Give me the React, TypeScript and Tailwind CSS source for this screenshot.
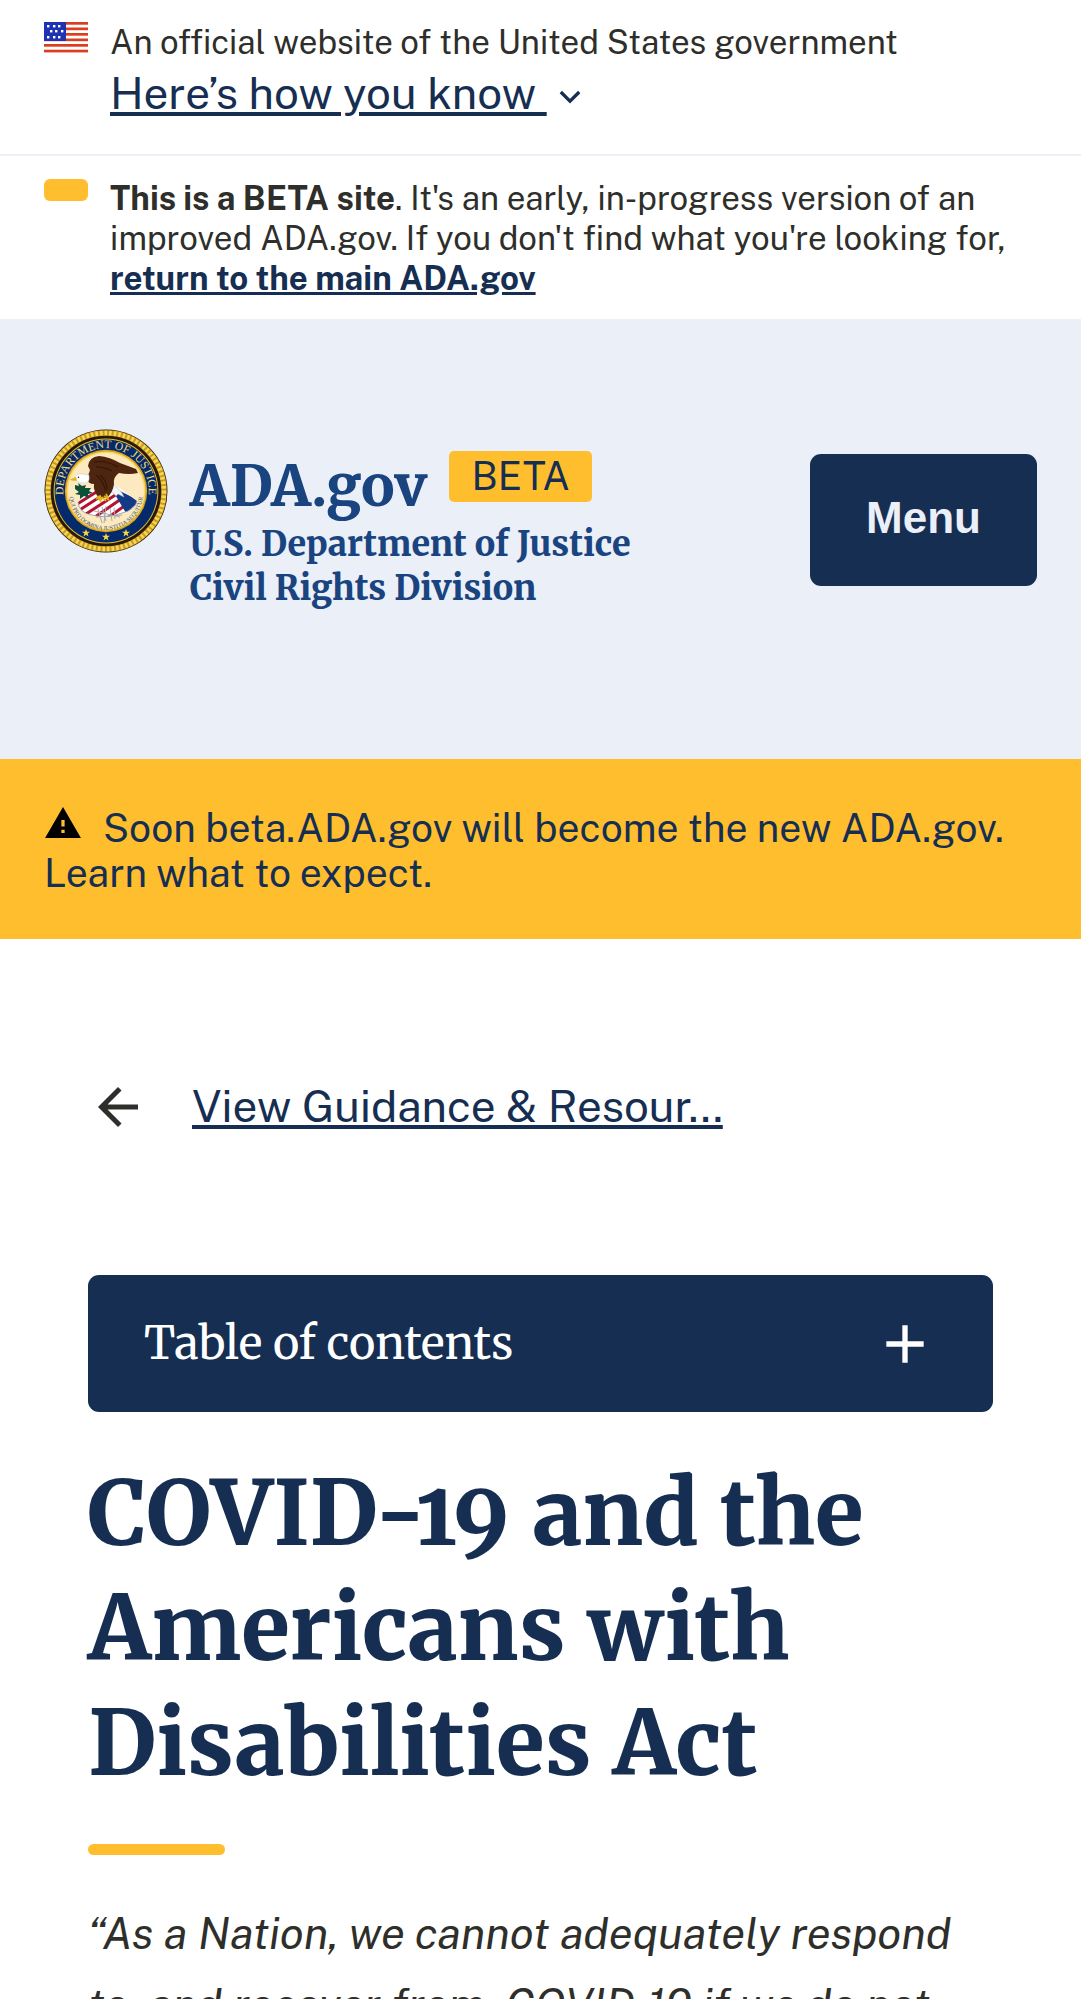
import React from "react";

const NAVY = "#162e51";

function Flag() {
  const stars = [
    [4, 4], [10, 4], [15, 4],
    [7, 9], [12, 9], [18, 9],
    [4, 15], [10, 15], [15, 15],
  ];
  return (
    <svg viewBox="0 0 44 31" className="h-[31px] w-11 shrink-0" aria-hidden="true">
      <rect width="44" height="31" fill="#fff" />
      {[0, 5.5, 11, 16.5, 22, 27.7].map((y) => (
        <rect key={y} y={y} width="44" height="2.7" fill="#db3e1f" />
      ))}
      <rect width="22" height="19" fill="#1e33b1" />
      {stars.map(([x, y]) => (
        <rect key={`${x}-${y}`} x={x - 1} y={y - 1} width="2.4" height="2.4" fill="#fff" />
      ))}
    </svg>
  );
}

function Seal() {
  return (
    <svg
      viewBox="0 0 124 124"
      className="h-[124px] w-[124px] shrink-0"
      role="img"
      aria-label="Department of Justice seal"
    >
      <defs>
        <path id="ringTop" d="M 21.4 75.5 A 42.8 42.8 0 1 1 102.6 75.5" />
        <path id="motto" d="M 25.5 58 A 37 37 0 1 0 98.5 58" />
        <clipPath id="shieldClip">
          <path d="M34 73 Q35 84 48 86 Q62 90 78 84 Q91 81 93 72 L70 55 L45 62 Z" />
        </clipPath>
      </defs>
      <circle cx="62" cy="62" r="61.5" fill="#2a1c0c" />
      <circle cx="62" cy="62" r="58" fill="none" stroke="#c79a22" strokeWidth="5.4" />
      <circle
        cx="62"
        cy="62"
        r="58"
        fill="none"
        stroke="#f5d551"
        strokeWidth="4.6"
        strokeDasharray="2.6 2"
      />
      <circle cx="62" cy="62" r="54" fill="#2a1606" />
      <circle cx="62" cy="62" r="52.4" fill="#e5c02c" />
      <circle cx="62" cy="62" r="51.4" fill="#042a6b" />
      <circle cx="62" cy="62" r="41.2" fill="#d9a520" />
      <circle cx="62" cy="62" r="39.6" fill="#f7d968" />
      <circle cx="62" cy="62" r="38" fill="#fde9bf" />
      <text fill="#f0d978" fontFamily="Liberation Serif, serif" fontSize="11.6">
        <textPath href="#ringTop" startOffset="50%" textAnchor="middle">
          DEPARTMENT OF JUSTICE
        </textPath>
      </text>
      <g clipPath="url(#shieldClip)">
        <rect x="30" y="52" width="66" height="40" fill="#fff" />
        <g stroke="#b5122f" strokeWidth="3">
          <path d="M30 77 L62 57" />
          <path d="M34 82 L68 60" />
          <path d="M42 85 L76 63" />
          <path d="M51 88 L80 68" />
          <path d="M62 90 L86 73" />
        </g>
        <path d="M66 57 L96 72 L82 84 L76 74 Z" fill="#123a86" />
      </g>
      <path d="M34 73 Q35 84 48 86 Q62 90 78 84 Q91 81 93 72" fill="none" stroke="#8d98a8" strokeWidth="0.8" />
      <path d="M64 60 L68 54 Q78 62 80 68 L74 65 L72 67 L69 64 Z" fill="#f3f4f6" stroke="#a9b0ba" strokeWidth="0.5" />
      <path
        d="M44 37 Q45 28 55 27 Q66 28 76 34 L92 40 L94 44 Q85 46 75 44 Q69 48 70 55 Q69 63 63 69 L55 69 Q49 62 50 55 Q44 55 43 50 L46 41 Z"
        fill="#4e2610"
      />
      <path d="M50 33 Q62 31 74 38 M52 38 Q60 38 68 42 M52 46 Q58 50 62 62 M56 46 Q63 52 63 60" fill="none" stroke="#351505" strokeWidth="1.1" />
      <path d="M31 48 Q33 44 39 45 L45 46 Q46 52 43 54 Q36 55 31 51 Z" fill="#fff" stroke="#a9b0ba" strokeWidth="0.4" />
      <path d="M32 48 L26 50.5 Q28 52.5 33 51.5 Z" fill="#e2b714" />
      <circle cx="34.5" cy="48.2" r="0.7" fill="#111" />
      <path d="M31 56 l4 1 l-1 -3 l4 3 l4 -1 l-1 3 l6 0 l-2 3 l4 2 l-5 1 l1 4 l-5 -2 l-4 3 l0 -4 l-5 -1 l4 -2 l-4 -3 z" fill="#0c5137" />
      <path d="M52 70 l4 -3 l2 4 M58 68 l4 4 M60 67 l5 4 M54 67 l3 6 M62 65 l2 4" stroke="#e2b714" strokeWidth="1.7" fill="none" />
      <path d="M54 80 L58 94 M58 78 L62 92 M62 77 L60 94 M66 79 L68 92 M70 79 L71 90 M50 82 L76 88 M52 88 L78 86" stroke="#a7aab0" strokeWidth="1" fill="none" />
      <text fill="#3d5372" fontFamily="Liberation Serif, serif" fontSize="6">
        <textPath href="#motto" startOffset="50%" textAnchor="middle">
          QUI PRO DOMINA JUSTITIA SEQUITUR
        </textPath>
      </text>
      {[
        [42, 104],
        [62, 108],
        [82, 104],
      ].map(([x, y]) => (
        <path
          key={x}
          transform={`translate(${x} ${y})`}
          d="M0 -4 L1 -1.2 L4 -1.2 L1.6 0.6 L2.5 3.5 L0 1.8 L-2.5 3.5 L-1.6 0.6 L-4 -1.2 L-1 -1.2 Z"
          fill="#f5d64c"
        />
      ))}
    </svg>
  );
}

function GovBanner() {
  return (
    <section
      aria-label="Official government website"
      className="flex gap-[22px] border-b-2 border-[#ebeff7] px-11 pt-[22px] pb-[35px]"
    >
      <Flag />
      <div>
        <p className="text-[33px] leading-10">An official website of the United States government</p>
        <button
          type="button"
          className="mt-[5px] flex items-center text-[44px] leading-[52px] text-[#162e51]"
        >
          <span className="whitespace-pre underline">{"Here’s how you know "}</span>
          <svg viewBox="0 0 22 14" className="mt-2 ml-3 h-3.5 w-[22px]" aria-hidden="true">
            <path d="M1.8 2 L11 11.2 L20.2 2" fill="none" stroke={NAVY} strokeWidth="3.2" />
          </svg>
        </button>
      </div>
    </section>
  );
}

function BetaBanner() {
  return (
    <section aria-label="Beta notice" className="flex gap-[22px] px-11 pt-[22px] pb-[21px]">
      <span className="mt-px h-[22px] w-11 shrink-0 rounded-md bg-[#ffbe2e]" />
      <p className="text-[33px] leading-10">
        <strong className="font-bold">This is a BETA site</strong>. It's an early, in-progress version of an
        improved ADA.gov. If you don't find what you're looking for,{" "}
        <a href="#main-site" className="font-bold text-[#162e51] underline">
          return to the main ADA.gov
        </a>
      </p>
    </section>
  );
}

function SiteHeader() {
  return (
    <header className="flex items-start bg-[#ebeff7] px-11 pt-[110px] pb-[148px]">
      <Seal />
      <div className="mt-[22px] ml-[22px] grow font-['Merriweather','DejaVu_Serif_Condensed',serif] font-extrabold text-[#1a4480]">
        <div className="flex items-start gap-[22px]">
          <a href="#home" className="text-[56px] leading-[71px]">
            ADA.gov
          </a>
          <span className="rounded-[5px] bg-[#ffbe2e] px-[22px] font-['Public_Sans','Inter',sans-serif] text-[39px] leading-[51px] font-normal text-[#162e51]">
            BETA
          </span>
        </div>
        <p className="pb-px text-[34px] leading-11">
          U.S. Department of Justice
          <br />
          Civil Rights Division
        </p>
      </div>
      <button
        type="button"
        className="mt-[25px] h-[132px] w-[227px] shrink-0 rounded-[11px] bg-[#162e51] pb-1 font-['Liberation_Sans',Arial,sans-serif] text-[44px] font-bold text-[#ebeff7]"
      >
        Menu
      </button>
    </header>
  );
}

function SiteAlert() {
  return (
    <section aria-label="Site alert" className="bg-[#ffbe2e] px-11 pt-[47px] pb-[43px] text-[39px] leading-[45px] text-[#162e51]">
      <p>
        <svg viewBox="1 2 22 19" className="mr-[22px] mb-1 ml-px inline h-[31px] w-9 align-baseline" aria-hidden="true">
          <path d="M1 21h22L12 2 1 21zm12-3h-2v-2h2v2zm0-4h-2v-4h2v4z" fill="#000" />
        </svg>
        Soon beta.ADA.gov will become the new ADA.gov. Learn what to expect.
      </p>
    </section>
  );
}

export default function App() {
  return (
    <div className="max-h-screen overflow-hidden bg-white font-['Public_Sans','Inter',sans-serif] text-[#2e2e2a]">
      <GovBanner />
      <BetaBanner />
      <SiteHeader />
      <SiteAlert />
      <main className="px-[88px] pt-[138px]">
        <nav aria-label="Breadcrumb" className="flex items-start gap-11">
          <svg viewBox="0 0 24 24" className="h-[60px] w-[60px] shrink-0" aria-hidden="true">
            <path d="M20 11H7.83l5.59-5.59L12 4l-8 8 8 8 1.41-1.41L7.83 13H20v-2z" fill="#2e2e2a" />
          </svg>
          <a href="#resources" className="text-[44px] leading-[58px] text-[#162e51] underline">
            View Guidance &amp; Resour...
          </a>
        </nav>
        <button
          type="button"
          aria-expanded="false"
          className="mt-[138px] flex h-[137px] w-full items-center justify-between rounded-[11px] bg-[#162e51] px-14 font-['Merriweather','DejaVu_Serif_Condensed',serif] text-[45px] text-white"
        >
          Table of contents
          <svg viewBox="0 0 24 24" className="h-16 w-16" aria-hidden="true">
            <path d="M19 13h-6v6h-2v-6H5v-2h6V5h2v6h6v2z" fill="#fff" />
          </svg>
        </button>
        <h1 className="mt-11 font-['Merriweather','DejaVu_Serif_Condensed',serif] text-[89px] leading-[115px] font-extrabold text-[#162e51] oldstyle-nums">
          COVID-19 and the Americans with Disabilities Act
        </h1>
        <div className="mt-[43px] h-[11px] w-[137px] rounded-md bg-[#ffbe2e]" />
        <p className="mt-[43px] text-[44px] leading-[71px] italic">
          “As a Nation, we cannot adequately respond to, and recover from, COVID-19 if we do not
        </p>
      </main>
    </div>
  );
}
